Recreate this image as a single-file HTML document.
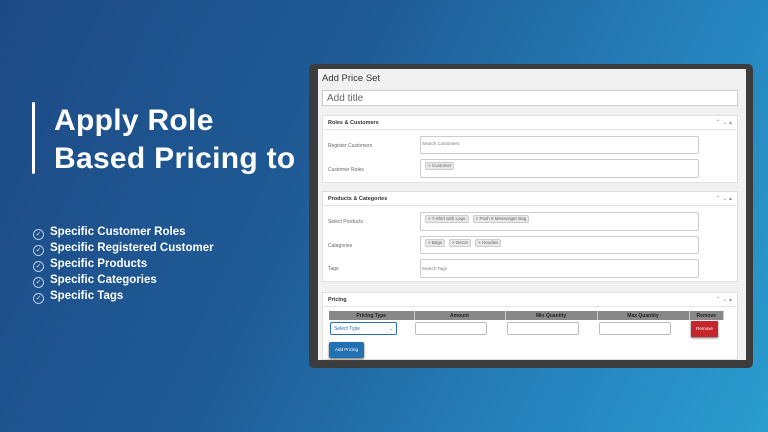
<!DOCTYPE html>
<html><head><meta charset="utf-8"><style>
*{margin:0;padding:0;box-sizing:border-box}
body{width:768px;height:432px;overflow:hidden;position:relative;font-family:"Liberation Sans",sans-serif;
background:linear-gradient(115deg,#1d4a86 0%,#1f5b96 40%,#2683bd 75%,#2a9dcf 100%);}
.bar{position:absolute;left:32px;top:102px;width:3px;height:72px;background:#fff;border-radius:2px}
h1{position:absolute;left:54px;top:102px;color:#fff;font-size:30px;line-height:38px;font-weight:bold;letter-spacing:0.3px}
ul{position:absolute;left:33px;top:224px;list-style:none;color:#fff;font-size:11.5px;font-weight:bold}
li{height:16px;line-height:16px}
li span{display:inline-block;width:11px;height:11px;margin-right:6px;border:1px solid #b8cde2;border-radius:50%;font-size:7px;line-height:9px;text-align:center;color:#cfe0f0;font-weight:normal;vertical-align:-1px}
.frame{position:absolute;left:309px;top:64px;width:444px;height:304px;background:#3c3c3c;border-radius:5px}
.pan{position:absolute;left:318px;top:69px;width:428px;height:291px;background:#f1f1f1}
.box{position:absolute;left:322px;width:416px;background:#fff;border:1px solid #e0e0e0}
.hd{height:14px;border-bottom:1px solid #e4e4e4;font-size:5.5px;font-weight:bold;color:#333;padding:4px 5px;position:relative}
.hd i{position:absolute;right:5px;top:3px;font-style:normal;color:#999;font-size:6px;font-weight:normal}
.in{position:absolute;left:97px;width:279px;background:#fff;border:1px solid #ccc;border-radius:2px;font-size:4.5px;color:#777;padding:4px 0 0 1px}
.tag{display:inline-block;background:#e8e8e8;border:1px solid #ccc;border-radius:2px;padding:0 2px;margin:0 1px 0 3px;font-size:4.5px;color:#666;line-height:6px}
.lb{position:absolute;left:5px;font-size:5px;color:#666}
th{background:#888;color:#222;font-size:5px;height:9px;border-right:1px solid #ccc}
</style></head><body>
<div class="bar"></div>
<h1>Apply Role<br>Based Pricing to</h1>
<ul>
<li><span>✓</span>Specific Customer Roles</li>
<li><span>✓</span>Specific Registered Customer</li>
<li><span>✓</span>Specific Products</li>
<li><span>✓</span>Specific Categories</li>
<li><span>✓</span>Specific Tags</li>
</ul>
<div class="frame"></div>
<div class="pan"></div>
<div style="position:absolute;left:322px;top:73px;font-size:9.5px;color:#333">Add Price Set</div>
<div style="position:absolute;left:322px;top:90px;width:416px;height:16px;background:#fff;border:1px solid #ccc;font-size:10px;color:#666;padding:2px 4px">Add title</div>

<div class="box" style="top:115px;height:68px">
<div class="hd">Roles &amp; Customers<i>⌃ ⌄ ▴</i></div>
<div class="lb" style="top:27px">Register Customers</div>
<div class="in" style="top:20px;height:18px">Search Customers</div>
<div class="lb" style="top:51px">Customer Roles</div>
<div class="in" style="top:43px;height:19px;padding-top:2px"><span class="tag">× Customer</span></div>
</div>

<div class="box" style="top:191px;height:91px">
<div class="hd">Products &amp; Categories<i>⌃ ⌄ ▴</i></div>
<div class="lb" style="top:27px">Select Products</div>
<div class="in" style="top:20px;height:19px;padding-top:2px"><span class="tag">× T-Shirt with Logo</span><span class="tag">× Push It Messenger Bag</span></div>
<div class="lb" style="top:51px">Categories</div>
<div class="in" style="top:44px;height:18px;padding-top:2px"><span class="tag">× Bags</span><span class="tag">× Decor</span><span class="tag">× Hoodies</span></div>
<div class="lb" style="top:74px">Tags</div>
<div class="in" style="top:67px;height:19px;padding-top:6px">Search Tags</div>
</div>

<div class="box" style="top:292px;height:68px">
<div class="hd">Pricing<i>⌃ ⌄ ▴</i></div>
<table style="position:absolute;left:6px;top:18px;border-collapse:collapse;width:395px">
<tr><th style="width:85px">Pricing Type</th><th style="width:91px">Amount</th><th style="width:92px">Min Quantity</th><th style="width:92px">Max Quantity</th><th>Remove</th></tr>
</table>
<div style="position:absolute;left:7px;top:29px;width:67px;height:13px;border:1px solid #2a6db5;border-radius:2px;font-size:5px;color:#2a6db5;padding:3px 3px">Select Type<span style="float:right">⌄</span></div>
<div style="position:absolute;left:92px;top:29px;width:72px;height:13px;border:1px solid #bbb;border-radius:2px"></div>
<div style="position:absolute;left:184px;top:29px;width:72px;height:13px;border:1px solid #bbb;border-radius:2px"></div>
<div style="position:absolute;left:276px;top:29px;width:72px;height:13px;border:1px solid #bbb;border-radius:2px"></div>
<div style="position:absolute;left:368px;top:28px;width:27px;height:16px;background:#c5262b;color:#fff;font-size:4.5px;text-align:center;line-height:16px;box-shadow:0 1px 2px #666">Remove</div>
<div style="position:absolute;left:6px;top:49px;width:35px;height:16px;background:#2271b1;color:#fff;font-size:4.5px;text-align:center;line-height:16px;border-radius:2px;box-shadow:0 1px 2px #666">Add Pricing</div>
</div>
</body></html>
